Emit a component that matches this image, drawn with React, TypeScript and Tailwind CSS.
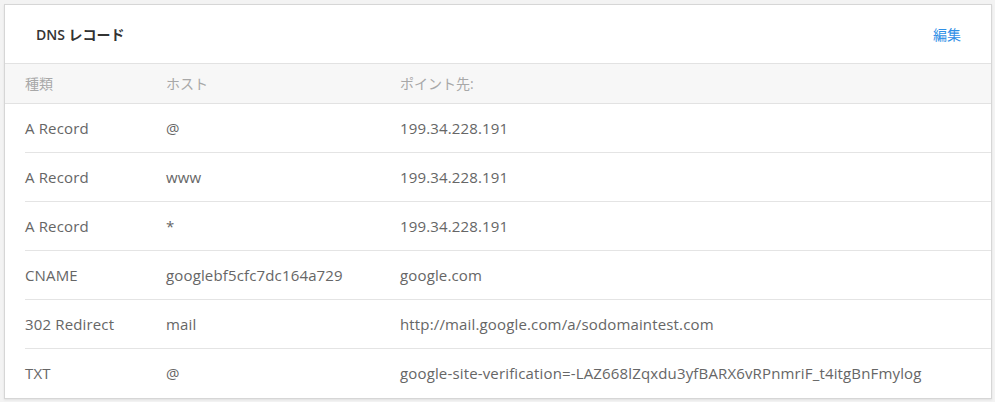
import React from "react";

const rows: [string, string, string][] = [
  ["A Record", "@", "199.34.228.191"],
  ["A Record", "www", "199.34.228.191"],
  ["A Record", "*", "199.34.228.191"],
  ["CNAME", "googlebf5cfc7dc164a729", "google.com"],
  ["302 Redirect", "mail", "http://mail.google.com/a/sodomaintest.com"],
  ["TXT", "@", "google-site-verification=-LAZ668lZqxdu3yfBARX6vRPnmriF_t4itgBnFmylog"],
];

export default function App() {
  return (
    <div
      className="w-[995px] h-[402px] bg-[#f3f3f3] pt-[4px] pl-[4px]"
      style={{ fontFamily: '"Open Sans", "Noto Sans CJK JP", sans-serif' }}
    >
      <div className="w-[988px] h-[395px] bg-white border border-[#d6d6d6] shadow-[0_1px_2px_rgba(0,0,0,0.08)] flex flex-col">
        <div className="h-[59px] flex items-center justify-between pl-[31px] pr-[30px] border-b border-[#e2e2e2]">
          <span className="text-[14px] font-semibold text-[#333]">DNS レコード</span>
          <span className="text-[14px] text-[#2f8fe6]">編集</span>
        </div>
        <div className="h-[40px] bg-[#f7f7f7] border-b border-[#e2e2e2] flex items-center pl-[20px] text-[14px] text-[#a8a8a8]">
          <div className="w-[141px]">種類</div>
          <div className="w-[234px]">ホスト</div>
          <div>ポイント先:</div>
        </div>
        <div className="pl-[20px]">
          {rows.map((r, i) => (
            <div
              key={i}
              className={`h-[49px] flex items-center text-[15px] tracking-[0.15px] text-[#666] ${i < rows.length - 1 ? "border-b border-[#e4e4e4]" : ""}`}
            >
              <div className="w-[141px]">{r[0]}</div>
              <div className="w-[234px]">{r[1]}</div>
              <div>{r[2]}</div>
            </div>
          ))}
        </div>
      </div>
    </div>
  );
}
